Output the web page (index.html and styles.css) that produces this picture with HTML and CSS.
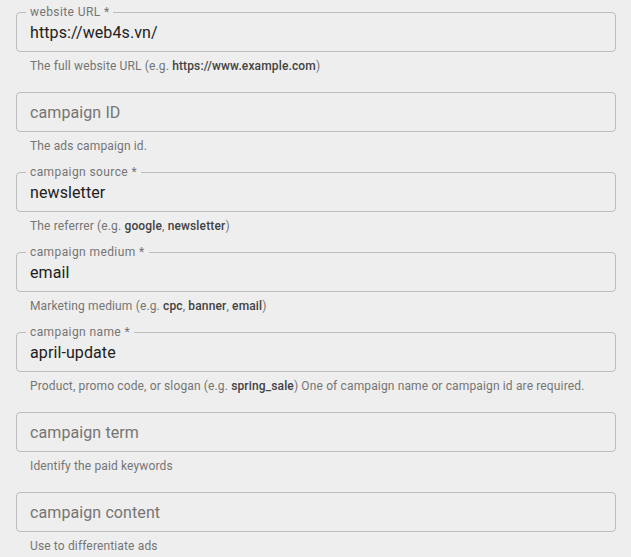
FILE: index.html
```html
<!DOCTYPE html>
<html lang="en">
<head>
<meta charset="utf-8">
<title>Campaign URL builder</title>
<link rel="stylesheet" href="styles.css">
</head>
<body>
<form class="form">
  <div class="field">
    <div class="box">
      <label class="label" for="url">website URL *</label>
      <input class="input" id="url" type="text" value="https://web4s.vn/">
    </div>
    <p class="help">The full website URL (e.g. <b>https://www.example.com</b>)</p>
  </div>
  <div class="field">
    <div class="box">
      <input class="input" type="text" placeholder="campaign ID">
    </div>
    <p class="help">The ads campaign id.</p>
  </div>
  <div class="field">
    <div class="box">
      <label class="label" for="src">campaign source *</label>
      <input class="input" id="src" type="text" value="newsletter">
    </div>
    <p class="help">The referrer (e.g. <b>google</b>, <b>newsletter</b>)</p>
  </div>
  <div class="field">
    <div class="box">
      <label class="label" for="med">campaign medium *</label>
      <input class="input" id="med" type="text" value="email">
    </div>
    <p class="help">Marketing medium (e.g. <b>cpc</b>, <b>banner</b>, <b>email</b>)</p>
  </div>
  <div class="field">
    <div class="box">
      <label class="label" for="name">campaign name *</label>
      <input class="input" id="name" type="text" value="april-update">
    </div>
    <p class="help">Product, promo code, or slogan (e.g. <b>spring_sale</b>) One of campaign name or campaign id are required.</p>
  </div>
  <div class="field">
    <div class="box">
      <input class="input" type="text" placeholder="campaign term">
    </div>
    <p class="help">Identify the paid keywords</p>
  </div>
  <div class="field">
    <div class="box">
      <input class="input" type="text" placeholder="campaign content">
    </div>
    <p class="help">Use to differentiate ads</p>
  </div>
</form>
</body>
</html>
```
FILE: styles.css
```css
html, body {
  margin: 0;
  padding: 0;
  background: #eeeeee;
}
body {
  font-family: Roboto, "Liberation Sans", Arial, sans-serif;
  color: #212121;
}
.form {
  display: flex;
  flex-direction: column;
  width: 600px;
  padding: 12px 0 0 16px;
}
.field {
  display: flex;
  flex-direction: column;
  height: 80px;
}
.box {
  position: relative;
  height: 40px;
  box-sizing: border-box;
  border: 1px solid #bdbdbd;
  border-radius: 4px;
}
.label {
  position: absolute;
  top: -8px;
  left: 9px;
  padding: 0 4px;
  background: #eeeeee;
  font-size: 12px;
  line-height: normal;
  letter-spacing: 0.4px;
  color: #757575;
}
.input {
  display: block;
  width: 100%;
  height: 38px;
  box-sizing: border-box;
  margin: 0;
  padding: 0 13px;
  border: 0;
  outline: none;
  background: transparent;
  font-family: inherit;
  font-size: 16px;
  letter-spacing: 0.1px;
  color: #212121;
}
.input::placeholder {
  color: #757575;
  opacity: 1;
}
.help {
  margin: 7px 0 0 14px;
  font-size: 12px;
  line-height: normal;
  letter-spacing: 0.14px;
  color: #757575;
}
.help b {
  font-weight: 500;
  color: #424242;
}
```
